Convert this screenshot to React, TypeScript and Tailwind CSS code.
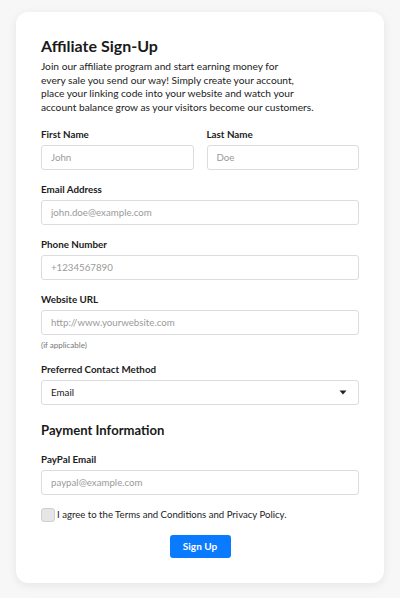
import React from 'react'

const font = { fontFamily: 'Lato, "Noto Sans", Arial, sans-serif' }

function Label({ children }: { children: React.ReactNode }) {
  return <label className="block text-[9.8px] leading-[14px] font-bold text-[#1c1c1c] mb-[4px]">{children}</label>
}

function Field({ placeholder }: { placeholder: string }) {
  return (
    <input
      placeholder={placeholder}
      className="block w-full h-[25px] rounded-[3px] border border-[#dcdcdc] bg-white px-[9px] text-[9.7px] text-[#222] placeholder:text-[#9a9a9a] outline-none"
    />
  )
}

export default function App() {
  return (
    <div className="min-h-[598px] bg-[#f7f7f7] px-[16px] pt-[12px] pb-[15px]" style={font}>
      <div className="bg-white rounded-[12px] shadow-[0_2px_10px_rgba(0,0,0,0.08)] px-[25px] pt-[24px] pb-[25px]">
        <h1 className="text-[16px] leading-[20px] font-bold text-[#1a1a1a]">Affiliate Sign-Up</h1>
        <p className="mt-[4px] text-[10.2px] leading-[13.7px] text-[#222]">
          Join our affiliate program and start earning money for<br />
          every sale you send our way! Simply create your account,<br />
          place your linking code into your website and watch your<br />
          account balance grow as your visitors become our customers.
        </p>

        <div className="mt-[12px] grid grid-cols-2 gap-x-[13px]">
          <div>
            <Label>First Name</Label>
            <Field placeholder="John" />
          </div>
          <div>
            <Label>Last Name</Label>
            <Field placeholder="Doe" />
          </div>
        </div>

        <div className="mt-[12px]">
          <Label>Email Address</Label>
          <Field placeholder="john.doe@example.com" />
        </div>

        <div className="mt-[12px]">
          <Label>Phone Number</Label>
          <Field placeholder="+1234567890" />
        </div>

        <div className="mt-[12px]">
          <Label>Website URL</Label>
          <Field placeholder="http://www.yourwebsite.com" />
          <div className="mt-[5px] text-[8px] leading-[10px] text-[#777]">(if applicable)</div>
        </div>

        <div className="mt-[12px]">
          <Label>Preferred Contact Method</Label>
          <div className="flex items-center justify-between h-[25px] rounded-[3px] border border-[#dcdcdc] bg-white px-[9px] text-[9.8px] text-[#222]">
            <span>Email</span>
            <svg width="8" height="5" viewBox="0 0 8 5" className="mr-[2px]">
              <path d="M0.5 0.5 L7.5 0.5 L4 4.5 Z" fill="#222" />
            </svg>
          </div>
        </div>

        <h2 className="mt-[16px] text-[13.1px] leading-[18px] font-bold text-[#1a1a1a]">Payment Information</h2>

        <div className="mt-[13px]">
          <Label>PayPal Email</Label>
          <Field placeholder="paypal@example.com" />
        </div>

        <div className="mt-[13px] flex items-center">
          <span className="w-[14px] h-[14px] rounded-[3px] border border-[#d0d0d0] bg-[#e6e6e6]" />
          <span className="ml-[2px] text-[9.6px] leading-[14px] text-[#222]">I agree to the Terms and Conditions and Privacy Policy.</span>
        </div>

        <div className="mt-[13px] flex justify-center">
          <button className="w-[61px] h-[23px] rounded-[3px] bg-[#0a7bff] text-white text-[10px] font-bold">Sign Up</button>
        </div>
      </div>
    </div>
  )
}
